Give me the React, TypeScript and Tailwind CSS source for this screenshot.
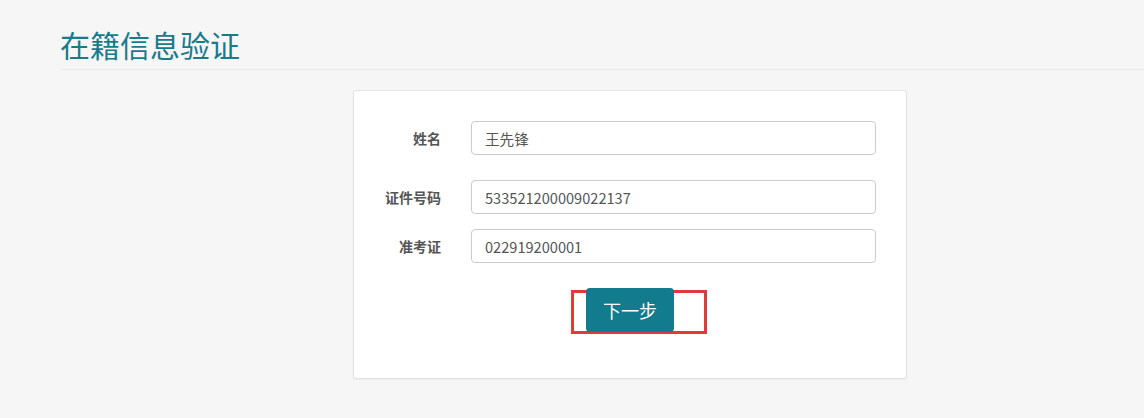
const fields = [
  { label: '姓名', value: '王先锋', gap: 'mt-0' },
  { label: '证件号码', value: '533521200009022137', gap: 'mt-[25px]' },
  { label: '准考证', value: '022919200001', gap: 'mt-[15px]' },
];

export default function App() {
  return (
    <div
      className="min-h-[418px] bg-[#f6f6f6] text-[#333]"
      style={{ fontFamily: '"Microsoft YaHei", "Noto Sans CJK SC", "Noto Sans", sans-serif' }}
    >
      <div className="pl-[60px] pt-[24px]">
        <h1 className="text-[30px] leading-[40px] text-[#187b8c] font-normal">在籍信息验证</h1>
        <div className="mt-[5px] h-px bg-[#ebebeb]" />
      </div>

      <div className="ml-[353px] mt-[20px] w-[554px] h-[289px] bg-white border border-[#e3e3e3] rounded-[3px] shadow-[0_1px_2px_rgba(0,0,0,0.06)] pt-[30px] pr-[30px]">
        {fields.map((f) => (
          <div key={f.label} className={`flex items-center ${f.gap}`}>
            <label className="w-[87px] text-right text-[14px] font-bold text-[#555]">{f.label}</label>
            <input
              readOnly
              value={f.value}
              className="ml-[30px] w-[405px] h-[34px] px-[13px] text-[14.6px] text-[#555] border border-[#ccc] rounded-[4px] bg-white outline-none"
            />
          </div>
        ))}

        <div className="mt-[25px] flex justify-center pl-[30px]">
          <div className="relative">
            <div className="absolute left-[-15px] top-[2px] w-[136px] h-[44px] border-[3px] border-[#e2393d]" />
            <button className="relative z-10 w-[88px] h-[44px] rounded-[4px] bg-[#127b8e] text-white text-[18px]">
              下一步
            </button>
          </div>
        </div>
      </div>
    </div>
  );
}
